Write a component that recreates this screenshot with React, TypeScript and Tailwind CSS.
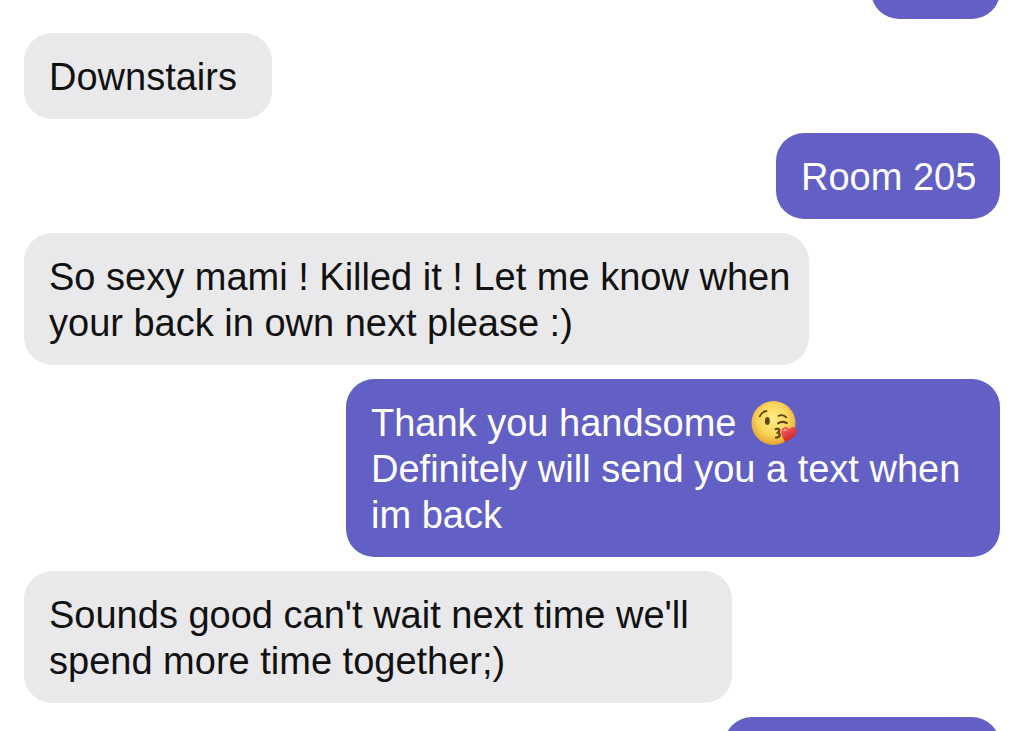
import React from "react";
import { twMerge as tm } from "tailwind-merge";

type Message = {
  id: number;
  from: "me" | "them";
  body?: React.ReactNode;
  className?: string;
};

const KissEmoji = () => (
  <svg
    viewBox="0 0 45 45"
    className="ml-1 inline-block size-[46px] align-top"
    role="img"
    aria-label="face blowing a kiss"
  >
    <defs>
      <radialGradient id="face" cx="0.5" cy="0.42" r="0.58">
        <stop offset="0" stopColor="#ffee87" />
        <stop offset="0.6" stopColor="#fbd75c" />
        <stop offset="1" stopColor="#e5a233" />
      </radialGradient>
      <linearGradient id="heart" x1="0" y1="0" x2="0.6" y2="1">
        <stop offset="0" stopColor="#fa6565" />
        <stop offset="1" stopColor="#ca2027" />
      </linearGradient>
    </defs>
    <circle cx="22" cy="22.5" r="21.5" fill="url(#face)" />
    <g fill="none" stroke="#69440c" strokeLinecap="round" strokeLinejoin="round">
      <path d="M8.5 16C10 13 12 11.2 15 10.8" strokeWidth="1.9" />
      <path d="M27 15.5C29.5 14.4 32.5 15 34.5 17" strokeWidth="1.8" />
      <path d="M26.5 22.8C29.5 20.6 32 21 35 22.5" strokeWidth="2.1" />
      <path
        d="M24 28.5C28 27 29.2 30 25.8 32.2C29.5 32.6 29 36.5 24.5 36.8"
        strokeWidth="2.1"
      />
    </g>
    <ellipse cx="16" cy="20.5" rx="2.4" ry="3.8" fill="#69440c" />
    <path
      d="M33.4 41C31 37 28.6 32.8 30 29.2C31.3 25.8 35.6 25.4 37.2 28.8C39.2 25.4 43.4 25.8 44.5 28.8C46 34 39.4 38.8 33.4 41Z"
      fill="url(#heart)"
    />
    <path
      d="M32.4 30C33 28.9 34 28.8 34.7 29.6"
      fill="none"
      stroke="#ffa09a"
      strokeWidth="1.4"
      strokeLinecap="round"
    />
  </svg>
);

const messages: Message[] = [
  // scrolled almost out of view
  { id: 1, from: "me", className: "-mt-[67px] w-[129px]" },
  { id: 2, from: "them", body: "Downstairs", className: "w-[248px]" },
  { id: 3, from: "me", body: "Room 205", className: "w-[224px]" },
  {
    id: 4,
    from: "them",
    body: (
      <>
        So sexy mami ! Killed it ! Let me know when
        <br />
        your back in own next please :)
      </>
    ),
    className: "w-[785px]",
  },
  {
    id: 5,
    from: "me",
    body: (
      <>
        Thank you handsome <KissEmoji />
        <br />
        Definitely will send you a text when
        <br />
        im back
      </>
    ),
    className: "w-[654px]",
  },
  {
    id: 6,
    from: "them",
    body: (
      <>
        Sounds good can't wait next time we'll
        <br />
        spend more time together;)
      </>
    ),
    className: "w-[708px]",
  },
  { id: 7, from: "me", className: "w-[276px]" },
];

const Bubble = ({ message }: { message: Message }) => {
  const { from, body, className } = message;

  return (
    <li
      className={tm(
        "min-h-[86px] max-w-full shrink-0 rounded-[28px] pt-[21px] pb-[19px] pl-[25px] pr-3",
        from === "me"
          ? "self-end bg-[#6360c5] text-white"
          : "self-start bg-[#e9e9eb] text-[#111111]",
        className
      )}
    >
      {body}
    </li>
  );
};

export default function App() {
  return (
    <main className="h-screen overflow-hidden bg-white font-['Liberation_Sans',Arial,sans-serif] text-[38px] leading-[46px]">
      <ul className="flex flex-col gap-[14px] px-6">
        {messages.map((message) => (
          <Bubble key={message.id} message={message} />
        ))}
      </ul>
    </main>
  );
}
